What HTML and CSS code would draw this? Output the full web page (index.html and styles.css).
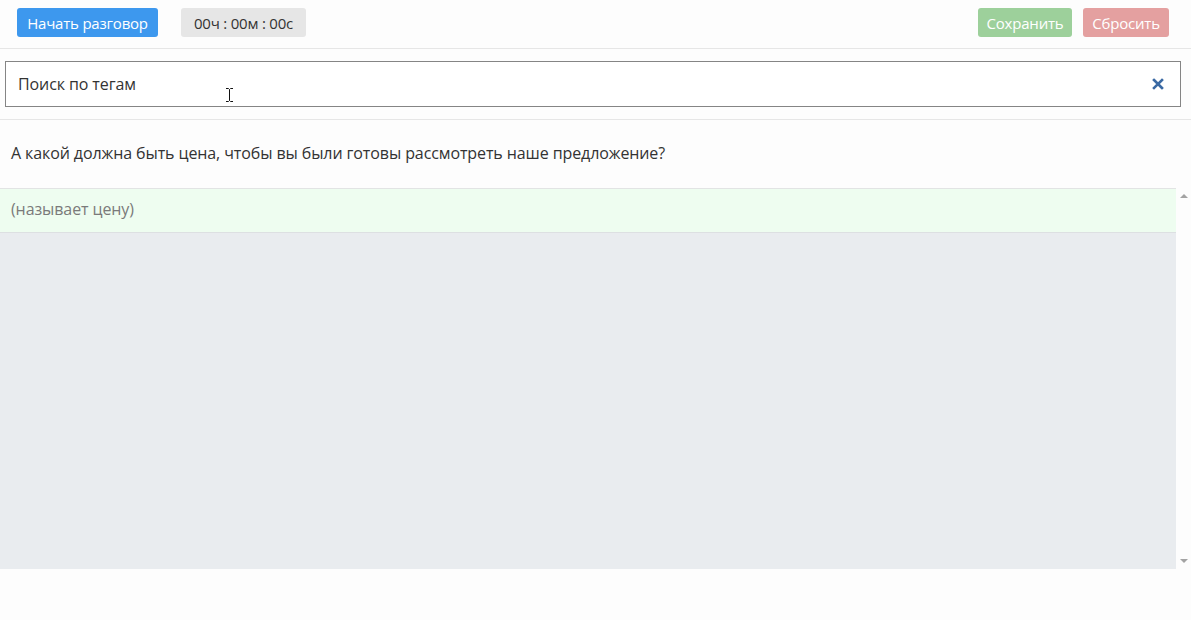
FILE: index.html
```html
<!DOCTYPE html>
<html lang="ru">
<head>
    <meta charset="UTF-8">
    <title>Скрипт разговора</title>
    <link rel="stylesheet" href="styles.css">
</head>
<body>
    <div class="toolbar">
        <button class="btn btn-start">Начать разговор</button>
        <span class="timer">00ч : 00м : 00с</span>
        <div class="toolbar-right">
            <button class="btn btn-save">Сохранить</button>
            <button class="btn btn-reset">Сбросить</button>
        </div>
    </div>

    <div class="search">
        <div class="search-box">
            <input type="text" class="search-input" placeholder="Поиск по тегам">
            <svg class="search-clear" width="12" height="12" viewBox="0 0 12 12">
                <path d="M2 2 L10 10 M10 2 L2 10" stroke="#3a69a3" stroke-width="2.6" stroke-linecap="square"/>
            </svg>
            <!-- text cursor over the field -->
            <svg class="ibeam" width="9" height="16" viewBox="0 0 9 16">
                <path d="M1 1.5 H3.5 L4.5 2.5 L5.5 1.5 H8 M4.5 2.5 V13.5 M1 14.5 H3.5 L4.5 13.5 L5.5 14.5 H8" fill="none" stroke="#fff" stroke-width="2.4"/>
                <path d="M1 1.5 H3.5 L4.5 2.5 L5.5 1.5 H8 M4.5 2.5 V13.5 M1 14.5 H3.5 L4.5 13.5 L5.5 14.5 H8" fill="none" stroke="#111" stroke-width="1"/>
            </svg>
        </div>
    </div>

    <div class="question">А какой должна быть цена, чтобы вы были готовы рассмотреть наше предложение?</div>

    <div class="answers">
        <div class="answers-list">
            <div class="answer">(называет цену)</div>
        </div>
        <div class="scrollbar">
            <span class="arrow arrow-up"></span>
            <span class="arrow arrow-down"></span>
        </div>
    </div>
</body>
</html>
```

FILE: styles.css
```css
* {
    margin: 0;
    padding: 0;
    box-sizing: border-box;
}

body {
    font-family: 'Open Sans', 'Noto Sans', sans-serif;
    background: #fdfdfd;
    color: #333;
    width: 1191px;
    height: 620px;
    overflow: hidden;
}

.toolbar {
    height: 49px;
    display: flex;
    align-items: flex-start;
    padding: 8px 22px 0 17px;
    border-bottom: 1px solid #e6e6e6;
}

.toolbar-right {
    margin-left: auto;
    display: flex;
    gap: 11px;
}

.btn {
    height: 29px;
    border: none;
    border-radius: 3px;
    color: #fff;
    font-family: inherit;
    font-size: 15px;
    font-weight: 500;
    padding: 0;
    white-space: nowrap;
    letter-spacing: -0.2px;
}

.btn-start {
    background: #3d98ee;
    width: 141px;
}

.btn-save {
    background: #9dd09b;
    width: 94px;
}

.btn-reset {
    background: #e4a0a0;
    width: 86px;
}

.timer {
    margin-left: 23px;
    height: 29px;
    width: 125px;
    display: flex;
    align-items: center;
    justify-content: center;
    background: #e6e6e6;
    border-radius: 3px;
    font-size: 15px;
    letter-spacing: -0.2px;
    color: #333;
}

.search {
    padding: 12px 10px 12px 5px;
    border-bottom: 1px solid #e6e6e6;
}

.search-box {
    position: relative;
    height: 46px;
    border: 1px solid #858585;
    display: flex;
    align-items: center;
    padding: 0 16px 0 12px;
    background: #fff;
}

.search-input {
    flex: 1;
    border: none;
    outline: none;
    font-family: inherit;
    font-size: 16px;
    letter-spacing: -0.1px;
    color: #333;
    background: transparent;
}

.search-input::placeholder {
    color: #333;
}

.search-clear {
    display: block;
}

.ibeam {
    position: absolute;
    left: 219px;
    top: 25px;
}

.question {
    height: 68px;
    padding: 0 11px 2px;
    display: flex;
    align-items: center;
    font-size: 16px;
    letter-spacing: -0.1px;
    color: #333;
}

.answers {
    height: 381px;
    display: flex;
}

.answers-list {
    flex: 1;
    background: #e9ecef;
}

.answer {
    height: 45px;
    background: #eefdf0;
    border-top: 1px solid #e2e4e4;
    border-bottom: 1px solid #dde0e2;
    padding: 0 11px 3px;
    display: flex;
    align-items: center;
    font-size: 16px;
    letter-spacing: -0.1px;
    color: #7a7a7a;
}

.scrollbar {
    width: 15px;
    display: flex;
    flex-direction: column;
    justify-content: space-between;
    align-items: center;
    padding: 6px 0 6px;
}

.arrow {
    width: 0;
    height: 0;
    border-left: 4px solid transparent;
    border-right: 4px solid transparent;
}

.arrow-up {
    border-bottom: 4px solid #a3a3a3;
}

.arrow-down {
    border-top: 4px solid #a3a3a3;
}
```
